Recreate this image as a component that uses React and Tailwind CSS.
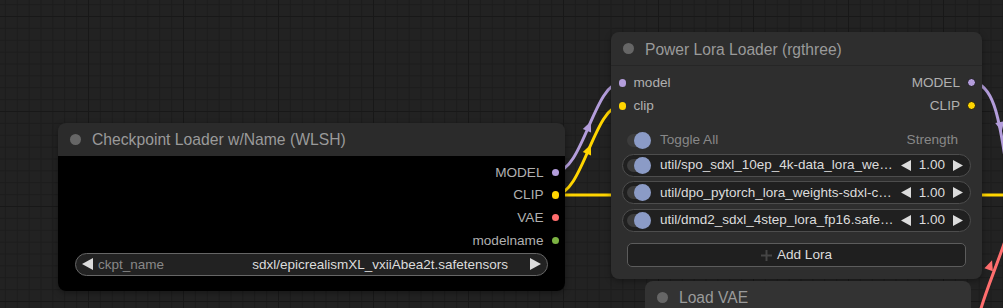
import React from "react";

function TriL({ className = "", w = 11, h = 12 }) {
  return (
    <svg width={w} height={h} viewBox={`0 0 ${w} ${h}`} className={className}>
      <path d={`M0 ${h / 2} L${w} 0 L${w} ${h} Z`} fill="currentColor" />
    </svg>
  );
}
function TriR({ className = "", w = 11, h = 12 }) {
  return (
    <svg width={w} height={h} viewBox={`0 0 ${w} ${h}`} className={className}>
      <path d={`M${w} ${h / 2} L0 0 L0 ${h} Z`} fill="currentColor" />
    </svg>
  );
}

function Toggle() {
  return (
    <div className="relative w-[24px] h-[17px] flex items-center shrink-0">
      <div className="w-[24px] h-[13px] rounded-full bg-[#3c3c3c]" />
      <div className="absolute right-0 top-0 w-[17px] h-[17px] rounded-full bg-[#8b9bc6]" />
    </div>
  );
}

function Dot({ color }) {
  return <div className={`w-[7.5px] h-[7.5px] rounded-full shrink-0 ${color}`} />;
}

function OutRow({ label, color }) {
  return (
    <div className="h-[22.7px] flex items-center justify-end gap-[8px] pr-[6px]">
      <span className="text-[13.6px] text-[#b0b0b0] pt-[1px]">{label}</span>
      <Dot color={color} />
    </div>
  );
}

function LoraRow({ text }) {
  return (
    <div className="h-[23px] flex items-center rounded-full border border-[#4d4d4d] bg-[#202020] pl-[4px] pr-[7px]">
      <Toggle />
      <span className="ml-[9px] flex-1 text-[13.5px] text-[#dcdcdc] whitespace-nowrap overflow-hidden pt-[1px]">{text}</span>
      <TriL w={10} h={11} className="text-[#dcdcdc] ml-[6px]" />
      <span className="ml-[8px] text-[13.5px] text-[#dcdcdc] pt-[1px]">1.00</span>
      <TriR w={10} h={11} className="text-[#dcdcdc] ml-[8px]" />
    </div>
  );
}

export default function App() {
  return (
    <div className="relative w-[1003px] h-[308px] overflow-hidden bg-[#222222] font-['Liberation_Sans',Arial,sans-serif] bg-[linear-gradient(to_right,#181818_1px,transparent_1px),linear-gradient(to_bottom,#181818_1px,transparent_1px),linear-gradient(to_right,#1c1c1c_1px,transparent_1px),linear-gradient(to_bottom,#1c1c1c_1px,transparent_1px)] bg-[size:95px_95px,95px_95px,11.875px_11.875px,11.875px_11.875px] bg-[position:88px_16px,88px_16px,4.875px_4.125px,4.875px_4.125px]">
      {/* wires */}
      <svg className="absolute inset-0" width="1003" height="308" viewBox="0 0 1003 308">
        <g fill="none" strokeWidth="3" strokeLinecap="round">
          <path d="M555 195 L1010 195" stroke="#ffd500" />
          <path d="M555 172 C583 172, 594 82, 622 82" stroke="#b39ddb" />
          <path d="M555 195 C583 195, 594 105, 622 105" stroke="#ffd500" />
          <path d="M972 82 C992 84, 999 112, 1007 172" stroke="#b39ddb" />
          <path d="M980 312 C986 290, 996 268, 1006 238" stroke="#ff6e6e" />
        </g>
        <polygon points="6,0 -4,-4.5 -4,4.5" fill="#b39ddb" transform="translate(588.5 127) rotate(-66.6)" />
        <polygon points="6,0 -4,-4.5 -4,4.5" fill="#ffd500" transform="translate(588.5 150) rotate(-66.6)" />
        <polygon points="6,0 -4,-4.5 -4,4.5" fill="#b39ddb" transform="translate(1000.5 126) rotate(78)" />
        <polygon points="6,0 -4,-4.5 -4,4.5" fill="#ff6e6e" transform="translate(990 266) rotate(-70)" />
      </svg>

      {/* Checkpoint Loader node */}
      <div className="absolute left-[58px] top-[123px] w-[507px] h-[168px] rounded-[8px] overflow-hidden flex flex-col shadow-[0_2px_6px_rgba(0,0,0,0.35)]">
        <div className="h-[33px] shrink-0 bg-[#2b2b2b] flex items-center pl-[12px] gap-[11px]">
          <div className="w-[11px] h-[11px] rounded-full bg-[#666666]" />
          <span className="text-[15.7px] text-[#9a9a9a] whitespace-nowrap pt-[1px]">Checkpoint Loader w/Name (WLSH)</span>
        </div>
        <div className="flex-1 bg-black pt-[5px] flex flex-col">
          <OutRow label="MODEL" color="bg-[#b39ddb]" />
          <OutRow label="CLIP" color="bg-[#ffd500]" />
          <OutRow label="VAE" color="bg-[#ff6e6e]" />
          <OutRow label="modelname" color="bg-[#7cb342]" />
          <div className="mt-[1px] mx-[17px] h-[23px] rounded-full border border-[#666666] bg-[#222222] flex items-center pl-[6px] pr-[6px]">
            <TriL className="text-[#dcdcdc]" />
            <span className="ml-[5px] text-[13.5px] text-[#888888] pt-[1px]">ckpt_name</span>
            <span className="flex-1 text-right text-[13.5px] text-[#dcdcdc] whitespace-nowrap pt-[1px]">sdxl/epicrealismXL_vxiiAbea2t.safetensors</span>
            <TriR className="ml-[22px] text-[#dcdcdc]" />
          </div>
        </div>
      </div>

      {/* Power Lora Loader node */}
      <div className="absolute left-[611px] top-[32px] w-[371px] h-[247px] rounded-[8px] bg-[#2e2e2e] flex flex-col shadow-[0_2px_6px_rgba(0,0,0,0.35)]">
        <div className="h-[34px] shrink-0 flex items-center pl-[11.5px] gap-[11.5px] border-b border-[#262626]">
          <div className="w-[11px] h-[11px] rounded-full bg-[#666666]" />
          <span className="text-[15.6px] text-[#9a9a9a] whitespace-nowrap pt-[2px]">Power Lora Loader (rgthree)</span>
        </div>
        <div className="pt-[5.5px] flex flex-col">
          <div className="h-[23px] flex items-center justify-between pl-[7.5px] pr-[6px]">
            <div className="flex items-center gap-[7.5px]">
              <Dot color="bg-[#b39ddb]" />
              <span className="text-[13.6px] text-[#b0b0b0] pt-[1px]">model</span>
            </div>
            <div className="flex items-center gap-[7px]">
              <span className="text-[13.6px] text-[#b0b0b0] pt-[1px]">MODEL</span>
              <div className="w-[9px] h-[9px] rounded-full bg-[#b39ddb] border-[1.5px] border-[#151515]" />
            </div>
          </div>
          <div className="h-[23px] flex items-center justify-between pl-[7.5px] pr-[6px]">
            <div className="flex items-center gap-[7.5px]">
              <Dot color="bg-[#ffd500]" />
              <span className="text-[13.6px] text-[#b0b0b0] pt-[1px]">clip</span>
            </div>
            <div className="flex items-center gap-[7px]">
              <span className="text-[13.6px] text-[#b0b0b0] pt-[1px]">CLIP</span>
              <div className="w-[9px] h-[9px] rounded-full bg-[#ffd500] border-[1.5px] border-[#151515]" />
            </div>
          </div>
        </div>
        <div className="mt-[14px] h-[17px] flex items-center pl-[16px] pr-[24px]">
          <Toggle />
          <span className="ml-[9px] flex-1 text-[13.6px] text-[#888888] pt-[1px]">Toggle All</span>
          <span className="text-[13.6px] text-[#888888] pt-[1px]">Strength</span>
        </div>
        <div className="mt-[5px] mx-[11px] flex flex-col gap-[4.5px]">
          <LoraRow text="util/spo_sdxl_10ep_4k-data_lora_we…" />
          <LoraRow text="util/dpo_pytorch_lora_weights-sdxl-c…" />
          <LoraRow text="util/dmd2_sdxl_4step_lora_fp16.safe…" />
        </div>
        <div className="mt-[11.5px] mx-[16px] h-[24px] rounded-[5px] border border-[#5c5c5c] bg-[#1f1f1f] flex items-center justify-center gap-[5px]">
          <svg width="11" height="11" viewBox="0 0 11 11">
            <path d="M5.5 0 V11 M0 5.5 H11" stroke="#454545" strokeWidth="2" />
          </svg>
          <span className="text-[13.6px] text-[#dcdcdc] pt-[1px]">Add Lora</span>
        </div>
      </div>

      {/* Load VAE node */}
      <div className="absolute left-[645px] top-[281px] w-[326px] h-[40px] rounded-t-[8px] bg-[#333333] flex flex-col">
        <div className="h-[32px] flex items-center pl-[11.5px] gap-[11.5px]">
          <div className="w-[11px] h-[11px] rounded-full bg-[#666666]" />
          <span className="text-[15.6px] text-[#9a9a9a] whitespace-nowrap pt-[1px]">Load VAE</span>
        </div>
      </div>
    </div>
  );
}
